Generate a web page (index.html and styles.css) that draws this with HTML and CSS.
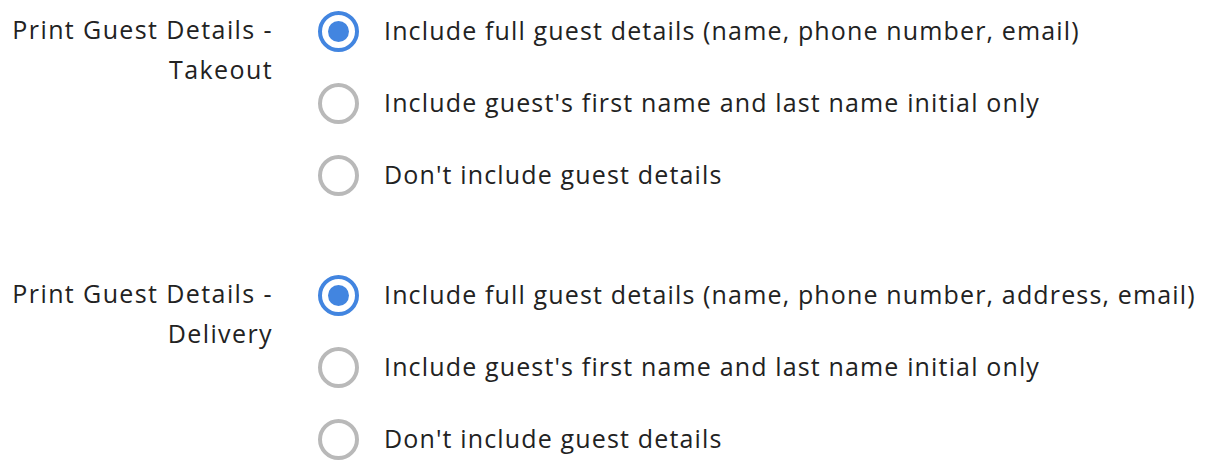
FILE: index.html
```html
<!DOCTYPE html>
<html>
<head>
<meta charset="utf-8">
<link rel="stylesheet" href="styles.css">
</head>
<body>
<div class="settings">
  <div class="setting">
    <div class="label">Print Guest Details -<br>Takeout</div>
    <div class="options">
      <label class="option"><span class="radio checked"></span><span class="text">Include full guest details (name, phone number, email)</span></label>
      <label class="option"><span class="radio"></span><span class="text">Include guest's first name and last name initial only</span></label>
      <label class="option"><span class="radio"></span><span class="text">Don't include guest details</span></label>
    </div>
  </div>
  <div class="setting">
    <div class="label">Print Guest Details -<br>Delivery</div>
    <div class="options">
      <label class="option"><span class="radio checked"></span><span class="text">Include full guest details (name, phone number, address, email)</span></label>
      <label class="option"><span class="radio"></span><span class="text">Include guest's first name and last name initial only</span></label>
      <label class="option"><span class="radio"></span><span class="text">Don't include guest details</span></label>
    </div>
  </div>
</div>
</body>
</html>
```
FILE: styles.css
```css
html, body {
  margin: 0;
  padding: 0;
  background: #fff;
}
body {
  font-family: "Open Sans", Roboto, sans-serif;
  font-size: 25px;
  color: #222;
}
.settings {
  display: flex;
  flex-direction: column;
  gap: 58px;
}
.setting {
  display: grid;
  grid-template-columns: 272px 1fr;
  column-gap: 46px;
}
.label {
  text-align: right;
  line-height: 40px;
  padding-top: 9px;
  letter-spacing: 1.4px;
  margin-right: -1px;
  white-space: nowrap;
}
.options {
  display: flex;
  flex-direction: column;
  gap: 10px;
}
.option {
  display: flex;
  align-items: center;
  height: 62px;
  gap: 25px;
}
.text {
  letter-spacing: 1.15px;
  white-space: nowrap;
  padding-bottom: 3px;
}
.radio {
  box-sizing: border-box;
  width: 41px;
  height: 41px;
  border-radius: 50%;
  border: 4px solid #b9b9b9;
  display: flex;
  align-items: center;
  justify-content: center;
  flex: none;
}
.radio.checked {
  border-color: #4285e0;
}
.radio.checked::after {
  content: "";
  width: 21px;
  height: 21px;
  border-radius: 50%;
  background: #4285e0;
}
```
